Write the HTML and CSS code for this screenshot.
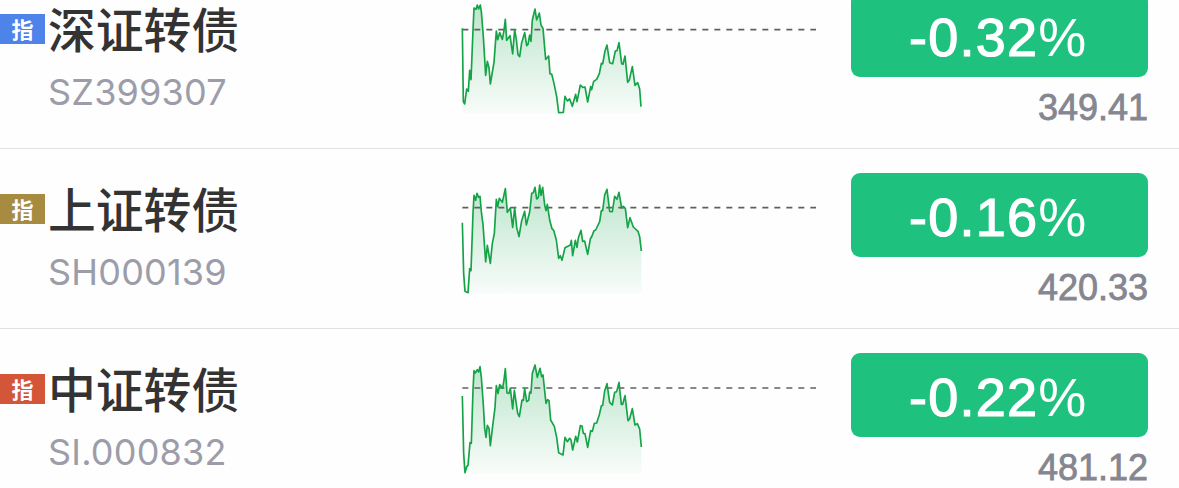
FILE: index.html
```html
<!DOCTYPE html>
<html lang="zh-CN">
<head>
<meta charset="utf-8">
<title>指数</title>
<link rel="stylesheet" href="styles.css">
</head>
<body>
<svg class="defs" width="0" height="0" aria-hidden="true">
  <defs>
    <linearGradient id="area" gradientUnits="userSpaceOnUse" x1="0" y1="30" x2="0" y2="370">
      <stop offset="0" stop-color="#12a54a" stop-opacity=".29"/>
      <stop offset="1" stop-color="#12a54a" stop-opacity=".025"/>
    </linearGradient>
  </defs>
</svg>
<main class="list">
  <section class="row">
    <span class="tag tag-sz">指</span>
    <div class="info"><h2 class="name">深证转债</h2><p class="code">SZ399307</p></div>
    <svg class="chart" viewBox="0 0 1140 390">
      <path class="area" d="M37 370V115L40 335L44 342L50 297L55 304L59 241L63 269L69 120L72 54L78 58L82 45L86 57L91 45L94 65L100 140L107 256L112 214L117 233L121 282L132 217L136 163L139 123L143 149L149 128L157 148L162 121L166 88L170 151L180 137L188 192L194 119L199 148L204 194L209 200L215 158L224 128L230 167L234 163L239 135L243 154L247 90L255 57L260 90L268 69L273 105L279 115L287 208L296 198L300 252L305 252L312 280L320 320L326 368L340 367L345 319L352 333L359 327L367 349L377 313L381 335L391 285L398 292L405 291L413 336L422 290L425 299L431 274L440 268L448 251L454 220L458 222L465 183L471 165L479 218L488 221L496 183L501 182L507 158L515 221L519 223L525 198L533 277L538 270L547 230L555 286L563 278L569 297L573 350V370Z"/>
      <path class="base" d="M37 119H1098"/>
      <path class="line" d="M37 115L40 335L44 342L50 297L55 304L59 241L63 269L69 120L72 54L78 58L82 45L86 57L91 45L94 65L100 140L107 256L112 214L117 233L121 282L132 217L136 163L139 123L143 149L149 128L157 148L162 121L166 88L170 151L180 137L188 192L194 119L199 148L204 194L209 200L215 158L224 128L230 167L234 163L239 135L243 154L247 90L255 57L260 90L268 69L273 105L279 115L287 208L296 198L300 252L305 252L312 280L320 320L326 368L340 367L345 319L352 333L359 327L367 349L377 313L381 335L391 285L398 292L405 291L413 336L422 290L425 299L431 274L440 268L448 251L454 220L458 222L465 183L471 165L479 218L488 221L496 183L501 182L507 158L515 221L519 223L525 198L533 277L538 270L547 230L555 286L563 278L569 297L573 350"/>
    </svg>
    <div class="quote"><div class="change">-0.32<span class="pct">%</span></div><div class="price">349.41</div></div>
  </section>
  <section class="row">
    <span class="tag tag-sh">指</span>
    <div class="info"><h2 class="name">上证转债</h2><p class="code">SH000139</p></div>
    <svg class="chart" viewBox="0 0 1140 390">
      <path class="area" d="M37 370V158L41 310L45 364L54 368L59 296L63 302L69 130L72 76L77 91L81 70L86 82L90 79L94 125L99 164L107 276L112 226L121 280L127 220L133 190L139 88L143 110L148 85L157 97L166 56L172 127L181 114L188 172L194 113L200 172L207 200L215 152L224 124L229 165L239 126L245 70L250 68L255 52L260 87L265 83L269 45L273 76L278 52L284 105L288 122L292 103L299 150L306 176L311 181L319 210L326 265L331 257L336 271L345 233L361 225L364 211L368 257L376 211L381 232L385 204L393 181L398 214L404 213L413 253L421 207L426 198L432 182L437 180L449 155L454 122L458 122L464 75L471 58L479 124L487 125L494 79L501 88L507 67L515 114L520 109L526 115L533 173L540 143L550 171L564 184L569 200L574 243V370Z"/>
      <path class="base" d="M37 113H1098"/>
      <path class="line" d="M37 158L41 310L45 364L54 368L59 296L63 302L69 130L72 76L77 91L81 70L86 82L90 79L94 125L99 164L107 276L112 226L121 280L127 220L133 190L139 88L143 110L148 85L157 97L166 56L172 127L181 114L188 172L194 113L200 172L207 200L215 152L224 124L229 165L239 126L245 70L250 68L255 52L260 87L265 83L269 45L273 76L278 52L284 105L288 122L292 103L299 150L306 176L311 181L319 210L326 265L331 257L336 271L345 233L361 225L364 211L368 257L376 211L381 232L385 204L393 181L398 214L404 213L413 253L421 207L426 198L432 182L437 180L449 155L454 122L458 122L464 75L471 58L479 124L487 125L494 79L501 88L507 67L515 114L520 109L526 115L533 173L540 143L550 171L564 184L569 200L574 243"/>
    </svg>
    <div class="quote"><div class="change">-0.16<span class="pct">%</span></div><div class="price">420.33</div></div>
  </section>
  <section class="row">
    <span class="tag tag-si">指</span>
    <div class="info"><h2 class="name">中证转债</h2><p class="code">SI.000832</p></div>
    <svg class="chart" viewBox="0 0 1140 390">
      <path class="area" d="M37 370V138L41 310L45 368L50 350L54 346L60 278L64 280L69 120L72 62L76 69L82 59L86 66L90 50L94 82L100 165L104 235L108 262L112 226L117 235L121 287L129 220L135 173L139 107L144 131L149 104L158 114L162 90L166 56L171 129L177 130L181 115L188 177L193 121L203 190L208 200L216 150L220 151L224 116L230 155L236 151L239 126L243 129L247 70L255 45L262 82L270 55L275 80L279 75L288 160L293 149L297 152L302 210L313 229L320 262L326 308L339 315L345 262L352 275L359 265L363 270L368 300L377 259L382 276L391 227L396 228L400 250L405 251L413 292L422 242L427 244L433 220L440 219L448 194L454 168L458 166L464 123L471 101L479 157L487 165L494 127L500 125L507 97L514 163L518 163L525 137L534 212L539 206L547 176L555 225L562 221L569 237L574 291V370Z"/>
      <path class="base" d="M37 114H1098"/>
      <path class="line" d="M37 138L41 310L45 368L50 350L54 346L60 278L64 280L69 120L72 62L76 69L82 59L86 66L90 50L94 82L100 165L104 235L108 262L112 226L117 235L121 287L129 220L135 173L139 107L144 131L149 104L158 114L162 90L166 56L171 129L177 130L181 115L188 177L193 121L203 190L208 200L216 150L220 151L224 116L230 155L236 151L239 126L243 129L247 70L255 45L262 82L270 55L275 80L279 75L288 160L293 149L297 152L302 210L313 229L320 262L326 308L339 315L345 262L352 275L359 265L363 270L368 300L377 259L382 276L391 227L396 228L400 250L405 251L413 292L422 242L427 244L433 220L440 219L448 194L454 168L458 166L464 123L471 101L479 157L487 165L494 127L500 125L507 97L514 163L518 163L525 137L534 212L539 206L547 176L555 225L562 221L569 237L574 291"/>
    </svg>
    <div class="quote"><div class="change">-0.22<span class="pct">%</span></div><div class="price">481.12</div></div>
  </section>
</main>
</body>
</html>
```
FILE: styles.css
```css
* { box-sizing: border-box; margin: 0; padding: 0; }
html, body { height: 488px; overflow: hidden; background: #fefefe; }
body { font-family: "Liberation Sans", "Noto Sans CJK SC", sans-serif; }
.defs { display: block; }
.list { margin-top: -31px; }
.row {
  display: grid;
  grid-template-columns: 45px 405px 380px 318px;
  align-items: start;
  height: 180px;
  border-bottom: 1px solid #e1e1e3;
}
.tag {
  height: 30px;
  margin-top: 45px;
  font: 700 22px/28px "Noto Sans CJK SC", sans-serif;
  text-align: center;
  color: #fff;
}
.tag-sz { background: #4e83ea; }
.tag-sh { background: #a78b41; }
.tag-si { background: #d35639; }
.info { padding: 31px 0 0 3px; }
.name {
  font: 500 47.8px/56px "Noto Sans CJK SC", sans-serif;
  color: #333;
  white-space: nowrap;
}
.code {
  margin-top: 14px;
  font: 400 36px/44px Inter, sans-serif;
  letter-spacing: 0.2px;
  color: #9c9da9;
  white-space: nowrap;
}
.chart { width: 380px; height: 130px; margin-top: 21px; }
.area { fill: url(#area); }
.base { fill: none; stroke: #625f60; stroke-width: 5; stroke-dasharray: 18 18; }
.line { fill: none; stroke: #15a347; stroke-width: 5; stroke-linejoin: round; }
.quote { padding: 24px 0 0 20.5px; }
.change {
  height: 84px;
  padding-right: 2px;
  border-radius: 9px;
  background: #1ec17e;
  color: #fff;
  font-size: 54px;
  line-height: 88px;
  letter-spacing: 1.2px;
  text-align: center;
  -webkit-text-stroke: 1.2px #fff;
}
.pct { -webkit-text-stroke-width: 0; }
.price {
  margin-top: 9px;
  font-size: 36px;
  line-height: 44px;
  text-align: right;
  color: #85868f;
  -webkit-text-stroke: 0.8px #85868f;
}
```
